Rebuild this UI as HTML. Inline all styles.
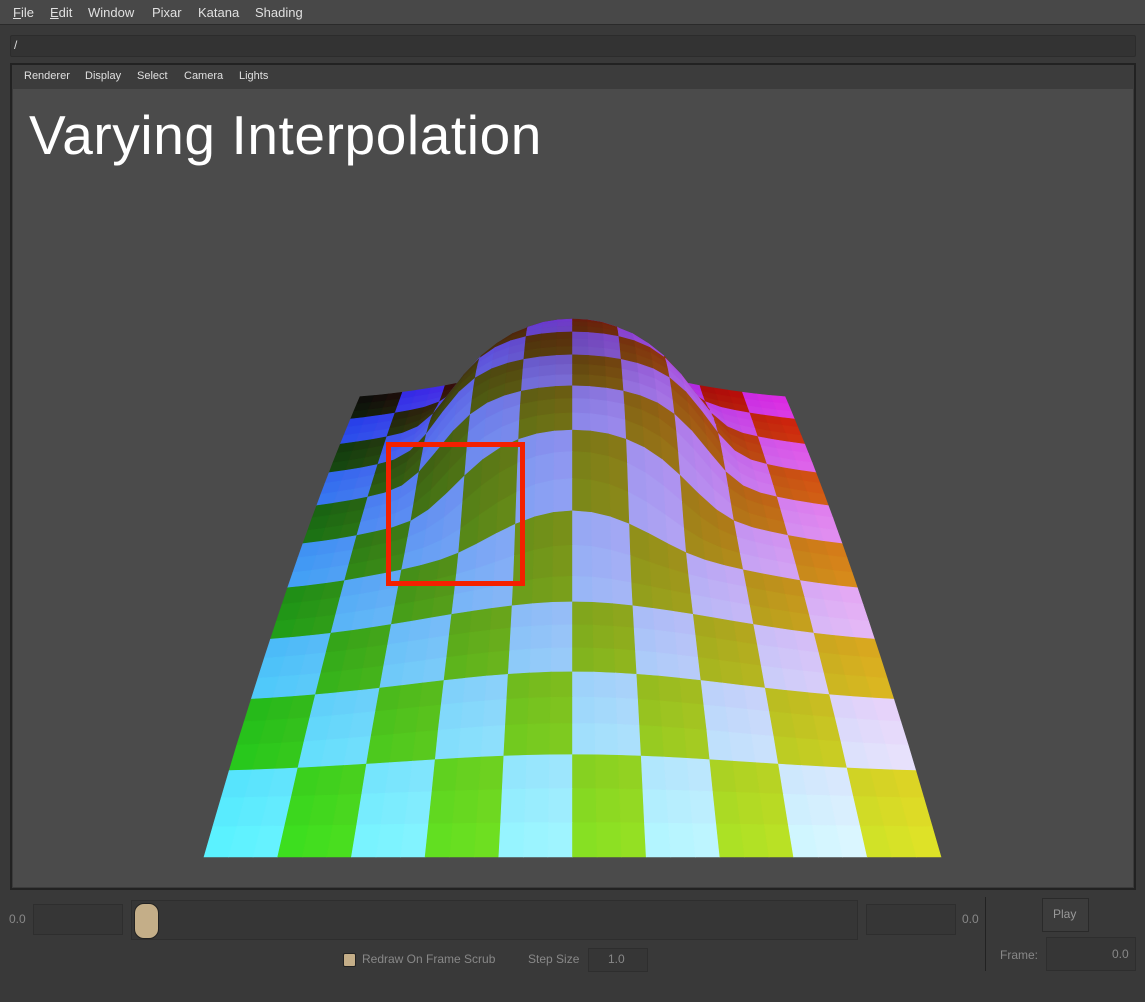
<!DOCTYPE html>
<html><head><meta charset="utf-8"><style>
body{margin:0;width:1145px;height:1002px;background:#393939;font-family:"Liberation Sans",sans-serif;overflow:hidden;position:relative;color:#ddd}
.abs{position:absolute}
#menu{left:0;top:0;width:1145px;height:24px;background:#484848;border-bottom:1px solid #2a2a2a;font-size:13px}
#menu span{position:absolute;top:5px;color:#e0e0e0}
#path{left:10px;top:35px;width:1124px;height:20px;background:#333;border:1px solid #2c2c2c;border-radius:2px;font-size:12px;color:#ddd}
#frame{left:10px;top:63px;width:1122px;height:823px;border:2px solid #222;background:#3b3b3b}
#tb{left:0;top:0;width:1122px;height:24px;background:#3c3c3c;font-size:11px}
#tb span{position:absolute;top:5px;color:#e0e0e0}
#vp{left:1px;top:24px;width:1120px;height:798px;background:#4b4b4b;overflow:hidden}
.box{background:#363636;border:1px solid #2e2e2e}
.sm{font-size:12px;color:#888}
</style></head><body>
<div id="menu" class="abs"><span style="left:13px"><u>F</u>ile</span><span style="left:50px"><u>E</u>dit</span><span style="left:88px">Window</span><span style="left:152px">Pixar</span><span style="left:198px">Katana</span><span style="left:255px">Shading</span></div>
<div id="path" class="abs"><span style="position:absolute;left:3px;top:2px">/</span></div>
<div id="frame" class="abs">
<div id="tb" class="abs"><span style="left:12px">Renderer</span><span style="left:73px">Display</span><span style="left:125px">Select</span><span style="left:172px">Camera</span><span style="left:227px">Lights</span></div>
<div id="vp" class="abs">
<div class="abs" style="left:16px;top:14px;font-size:55px;letter-spacing:0.6px;color:#fff;white-space:nowrap">Varying Interpolation</div>
<svg id="sv" class="abs" style="left:-14px;top:-89px" width="1145" height="1002"></svg>
</div></div>
<div class="abs sm" style="left:9px;top:912px">0.0</div>
<div class="abs box" style="left:33px;top:904px;width:88px;height:29px"></div>
<div class="abs box" style="left:131px;top:900px;width:725px;height:38px"></div>
<div class="abs" style="left:134px;top:903px;width:23px;height:34px;background:#c4ae88;border-radius:10px;border:1px solid #222"></div>
<div class="abs box" style="left:866px;top:904px;width:88px;height:29px"></div>
<div class="abs sm" style="left:962px;top:912px">0.0</div>
<div class="abs" style="left:985px;top:897px;width:1px;height:74px;background:#222"></div>
<div class="abs box" style="left:1042px;top:898px;width:45px;height:32px;background:#3c3c3c;border-color:#2a2a2a"></div>
<div class="abs sm" style="left:1053px;top:907px;color:#999">Play</div>
<div class="abs sm" style="left:1000px;top:948px">Frame:</div>
<div class="abs box" style="left:1046px;top:937px;width:88px;height:32px"></div>
<div class="abs sm" style="left:1112px;top:947px">0.0</div>
<div class="abs" style="left:343px;top:953px;width:11px;height:12px;background:#c4ae88;border-radius:2px;border:1px solid #222"></div>
<div class="abs sm" style="left:362px;top:952px">Redraw On Frame Scrub</div>
<div class="abs sm" style="left:528px;top:952px">Step Size</div>
<div class="abs box" style="left:588px;top:948px;width:58px;height:22px;background:#363636"></div>
<div class="abs sm" style="left:608px;top:952px">1.0</div>
<script>
var N=30,sv=document.getElementById('sv'),h='';
function P(u,d){var s=u*2-1;var a=1.03;var y=857-456*(d*(1+a))/(1+a*d);var hw=368.5/(1+0.734*d);var x=573.5+s*hw;
var b=60*Math.exp(-(s*s/0.5+(d-0.6)*(d-0.6)/0.25))*Math.min(1,d/0.12);
var r2=s*s/0.33+(d-0.7)*(d-0.7)/0.1;var dy=b+68*Math.exp(-Math.pow(r2,3));
return [x,y-dy];}
function L(a,b,t){return a+(b-a)*t}
function col(u,v,A){var c=A?[[90,245,255],[235,250,255],[30,40,230],[220,40,225]]:[[40,225,30],[225,230,40],[10,10,10],[205,10,10]];
var r=[];for(var k=0;k<3;k++){r.push(Math.round(L(L(c[0][k],c[1][k],u),L(c[2][k],c[3][k],u),v)));}
var m=1-0.2*Math.exp(-((u-0.5)*(u-0.5)/0.03+(v-0.75)*(v-0.75)/0.03));
return 'rgb('+r.map(function(x){return Math.min(255,Math.round(x*m))}).join(',')+')';}
for(var j=N-1;j>=0;j--)for(var i=0;i<N;i++){var u0=i/N,u1=(i+1)/N,d0=j/N,d1=(j+1)/N;
var p=[P(u0,d0),P(u1,d0),P(u1,d1),P(u0,d1)];var A=(Math.floor(i*10/N)+Math.floor(j*10/N))%2==0;var c=col((i+.5)/N,(j+.5)/N,A);
h+='<polygon points="'+p.map(function(q){return q[0].toFixed(1)+','+q[1].toFixed(1)}).join(' ')+'" fill="'+c+'" stroke="'+c+'" stroke-width="0.6"/>';}
h+='<rect x="389.5" y="444.5" width="134" height="139" fill="none" stroke="#f42000" stroke-width="5"/>';
sv.innerHTML=h;
</script>
</body></html>
